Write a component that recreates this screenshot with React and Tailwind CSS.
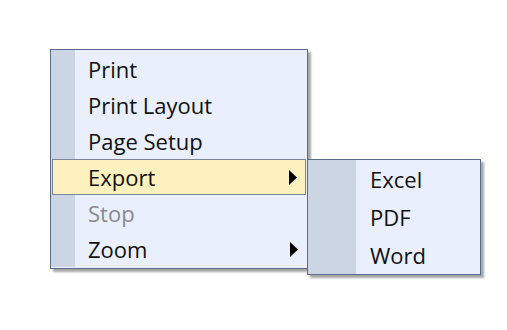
const mainItems = [
  { label: 'Print' },
  { label: 'Print Layout' },
  { label: 'Page Setup' },
  { label: 'Export', sub: true, active: true },
  { label: 'Stop', disabled: true },
  { label: 'Zoom', sub: true },
];

const subItems = ['Excel', 'PDF', 'Word'];

function Arrow() {
  return (
    <svg width="8" height="15" viewBox="0 0 8 15" className="block">
      <polygon points="0,0 8,7.5 0,15" fill="#000" />
    </svg>
  );
}

export default function App() {
  return (
    <div className="relative h-[330px] w-[507px] bg-white" style={{ fontFamily: '"Open Sans", "Noto Sans", sans-serif' }}>
      <div className="absolute left-[50px] top-[49px] w-[258px] border border-[#5b6b8c] bg-[#e9effd] py-px shadow-[3px_3px_2px_rgba(0,0,0,0.35)]">
        <div className="absolute bottom-px left-0 top-0 w-[24px] bg-[#ccd5e4]" />
        {mainItems.map((item) => (
          <div
            key={item.label}
            className={
              'relative flex h-[36px] items-center pt-px text-[22px] ' +
              (item.active ? 'mx-px border border-[#7d8699] bg-[#fdf2bf] pl-[35px] pr-[8px]' : 'pl-[37px] pr-[9px]') +
              (item.disabled ? ' text-[#8a8a8a]' : ' text-[#111]')
            }
          >
            <span className="flex-1">{item.label}</span>
            {item.sub ? <Arrow /> : null}
          </div>
        ))}
      </div>

      <div className="absolute left-[307px] top-[159px] w-[174px] border border-[#5b6b8c] bg-[#e9effd] shadow-[3px_3px_2px_rgba(0,0,0,0.35)]">
        <div className="absolute bottom-0 left-0 top-0 w-[48px] bg-[#ccd5e4]" />
        {subItems.map((label) => (
          <div key={label} className="relative flex h-[38px] items-center pl-[62px] pt-px text-[22px] text-[#111]">
            {label}
          </div>
        ))}
      </div>
    </div>
  );
}
